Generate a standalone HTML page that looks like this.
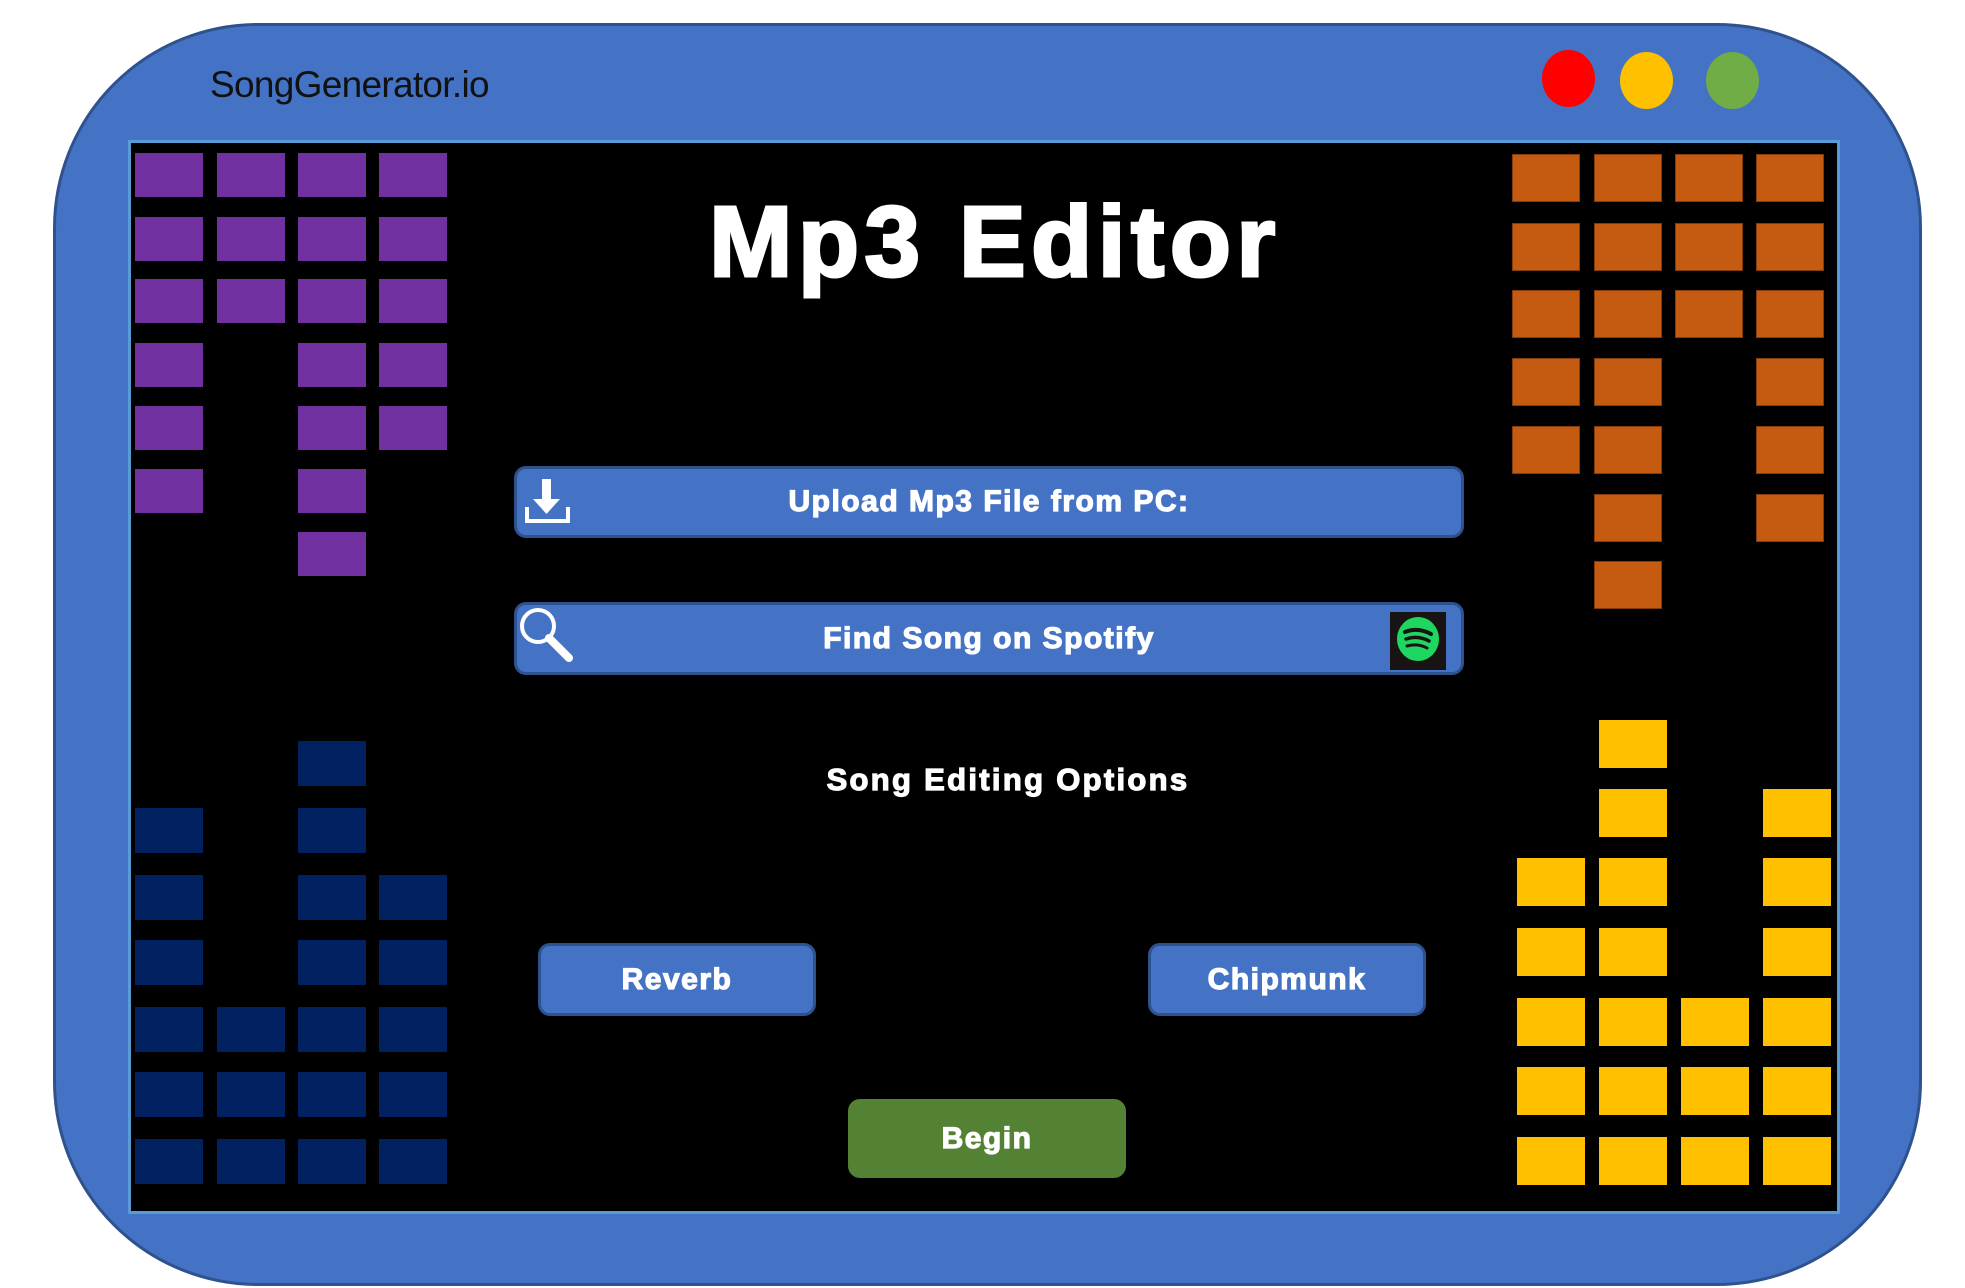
<!DOCTYPE html>
<html><head><meta charset="utf-8"><style>
*{margin:0;padding:0;box-sizing:border-box}
body{width:1965px;height:1288px;background:#fff;position:relative;overflow:hidden;font-family:"Liberation Sans",Arial,sans-serif}
.a{position:absolute}
.frame{left:53px;top:23px;width:1869px;height:1263px;background:#4472c4;border:3px solid #2f528f;border-radius:205px}
.panel{left:128px;top:140px;width:1712px;height:1074px;background:#000;border:3px solid #5b9bd5}
.b{position:absolute;width:68px}
.p{background:#7030a0;height:44px}
.o{background:#c55a11;height:48px;border:1px solid #843c0c}
.n{background:#002060;height:45px}
.y{background:#ffc000;height:48px}
.btn{position:absolute;background:#4472c4;border:3px solid #2f528f;border-radius:12px;color:#fff;font-weight:bold;font-size:30px;display:flex;align-items:center;justify-content:center;letter-spacing:1.5px;-webkit-text-stroke:1.2px #fff}
</style></head><body>
<div class="a frame"></div>
<div class="a" style="left:210px;top:64px;font-size:37px;color:#111;letter-spacing:-0.7px">SongGenerator.io</div>
<div class="a" style="left:1542px;top:50px;width:53px;height:57px;border-radius:50%;background:#ff0000"></div>
<div class="a" style="left:1620px;top:52px;width:53px;height:57px;border-radius:50%;background:#ffc000"></div>
<div class="a" style="left:1706px;top:52px;width:53px;height:57px;border-radius:50%;background:#70ad47"></div>
<div class="a panel"></div>
<div class="a" style="left:600px;top:177px;width:790px;text-align:center;color:#fff;font-weight:bold;font-size:100px;line-height:130px;letter-spacing:5.5px;-webkit-text-stroke:3px #fff">Mp3 Editor</div>

<div class="btn" style="left:514px;top:466px;width:950px;height:72px">Upload Mp3 File from PC:</div>
<svg class="a" style="left:523px;top:477px" width="50" height="48" viewBox="0 0 50 48"><rect x="19" y="2" width="9" height="22" fill="#fff"/><polygon points="10,22 37,22 23.5,37" fill="#fff"/><path d="M4 30 V44 H45 V30" stroke="#fff" stroke-width="4" fill="none"/></svg>

<div class="btn" style="left:514px;top:602px;width:950px;height:73px">Find Song on Spotify</div>
<svg class="a" style="left:517px;top:605px" width="62" height="60" viewBox="0 0 62 60"><circle cx="21" cy="21" r="16" stroke="#fff" stroke-width="4" fill="none"/><line x1="32" y1="33" x2="52" y2="53" stroke="#fff" stroke-width="8" stroke-linecap="round"/></svg>
<div class="a" style="left:1390px;top:612px;width:56px;height:58px;background:#191414"></div>
<svg class="a" style="left:1396px;top:616px" width="44" height="46" viewBox="0 0 44 46"><ellipse cx="22" cy="23" rx="21" ry="22" fill="#1ed760"/><path d="M9 16 Q22 11 35 18" stroke="#191414" stroke-width="4" fill="none" stroke-linecap="round"/><path d="M10 23 Q22 19 33 25" stroke="#191414" stroke-width="3.5" fill="none" stroke-linecap="round"/><path d="M11 30 Q22 27 31 32" stroke="#191414" stroke-width="3" fill="none" stroke-linecap="round"/></svg>

<div class="a" style="left:740px;top:762px;width:536px;text-align:center;color:#fff;font-weight:bold;font-size:31px;letter-spacing:2.3px;-webkit-text-stroke:1.2px #fff">Song Editing Options</div>

<div class="btn" style="left:538px;top:943px;width:278px;height:73px">Reverb</div>
<div class="btn" style="left:1148px;top:943px;width:278px;height:73px">Chipmunk</div>
<div class="btn" style="left:848px;top:1099px;width:278px;height:79px;background:#548235;border:none">Begin</div>

<div>
<!-- purple -->
<div class="b p" style="left:135px;top:153px"></div><div class="b p" style="left:135px;top:217px"></div><div class="b p" style="left:135px;top:279px"></div><div class="b p" style="left:135px;top:343px"></div><div class="b p" style="left:135px;top:406px"></div><div class="b p" style="left:135px;top:469px"></div>
<div class="b p" style="left:217px;top:153px"></div><div class="b p" style="left:217px;top:217px"></div><div class="b p" style="left:217px;top:279px"></div>
<div class="b p" style="left:298px;top:153px"></div><div class="b p" style="left:298px;top:217px"></div><div class="b p" style="left:298px;top:279px"></div><div class="b p" style="left:298px;top:343px"></div><div class="b p" style="left:298px;top:406px"></div><div class="b p" style="left:298px;top:469px"></div><div class="b p" style="left:298px;top:532px"></div>
<div class="b p" style="left:379px;top:153px"></div><div class="b p" style="left:379px;top:217px"></div><div class="b p" style="left:379px;top:279px"></div><div class="b p" style="left:379px;top:343px"></div><div class="b p" style="left:379px;top:406px"></div>
<!-- orange -->
<div class="b o" style="left:1512px;top:154px"></div><div class="b o" style="left:1512px;top:223px"></div><div class="b o" style="left:1512px;top:290px"></div><div class="b o" style="left:1512px;top:358px"></div><div class="b o" style="left:1512px;top:426px"></div>
<div class="b o" style="left:1594px;top:154px"></div><div class="b o" style="left:1594px;top:223px"></div><div class="b o" style="left:1594px;top:290px"></div><div class="b o" style="left:1594px;top:358px"></div><div class="b o" style="left:1594px;top:426px"></div><div class="b o" style="left:1594px;top:494px"></div><div class="b o" style="left:1594px;top:561px"></div>
<div class="b o" style="left:1675px;top:154px"></div><div class="b o" style="left:1675px;top:223px"></div><div class="b o" style="left:1675px;top:290px"></div>
<div class="b o" style="left:1756px;top:154px"></div><div class="b o" style="left:1756px;top:223px"></div><div class="b o" style="left:1756px;top:290px"></div><div class="b o" style="left:1756px;top:358px"></div><div class="b o" style="left:1756px;top:426px"></div><div class="b o" style="left:1756px;top:494px"></div>
<!-- navy -->
<div class="b n" style="left:135px;top:808px"></div><div class="b n" style="left:135px;top:875px"></div><div class="b n" style="left:135px;top:940px"></div><div class="b n" style="left:135px;top:1007px"></div><div class="b n" style="left:135px;top:1072px"></div><div class="b n" style="left:135px;top:1139px"></div>
<div class="b n" style="left:217px;top:1007px"></div><div class="b n" style="left:217px;top:1072px"></div><div class="b n" style="left:217px;top:1139px"></div>
<div class="b n" style="left:298px;top:741px"></div><div class="b n" style="left:298px;top:808px"></div><div class="b n" style="left:298px;top:875px"></div><div class="b n" style="left:298px;top:940px"></div><div class="b n" style="left:298px;top:1007px"></div><div class="b n" style="left:298px;top:1072px"></div><div class="b n" style="left:298px;top:1139px"></div>
<div class="b n" style="left:379px;top:875px"></div><div class="b n" style="left:379px;top:940px"></div><div class="b n" style="left:379px;top:1007px"></div><div class="b n" style="left:379px;top:1072px"></div><div class="b n" style="left:379px;top:1139px"></div>
<!-- yellow -->
<div class="b y" style="left:1517px;top:858px"></div><div class="b y" style="left:1517px;top:928px"></div><div class="b y" style="left:1517px;top:998px"></div><div class="b y" style="left:1517px;top:1067px"></div><div class="b y" style="left:1517px;top:1137px"></div>
<div class="b y" style="left:1599px;top:720px"></div><div class="b y" style="left:1599px;top:789px"></div><div class="b y" style="left:1599px;top:858px"></div><div class="b y" style="left:1599px;top:928px"></div><div class="b y" style="left:1599px;top:998px"></div><div class="b y" style="left:1599px;top:1067px"></div><div class="b y" style="left:1599px;top:1137px"></div>
<div class="b y" style="left:1681px;top:998px"></div><div class="b y" style="left:1681px;top:1067px"></div><div class="b y" style="left:1681px;top:1137px"></div>
<div class="b y" style="left:1763px;top:789px"></div><div class="b y" style="left:1763px;top:858px"></div><div class="b y" style="left:1763px;top:928px"></div><div class="b y" style="left:1763px;top:998px"></div><div class="b y" style="left:1763px;top:1067px"></div><div class="b y" style="left:1763px;top:1137px"></div>
</div>
</body></html>
